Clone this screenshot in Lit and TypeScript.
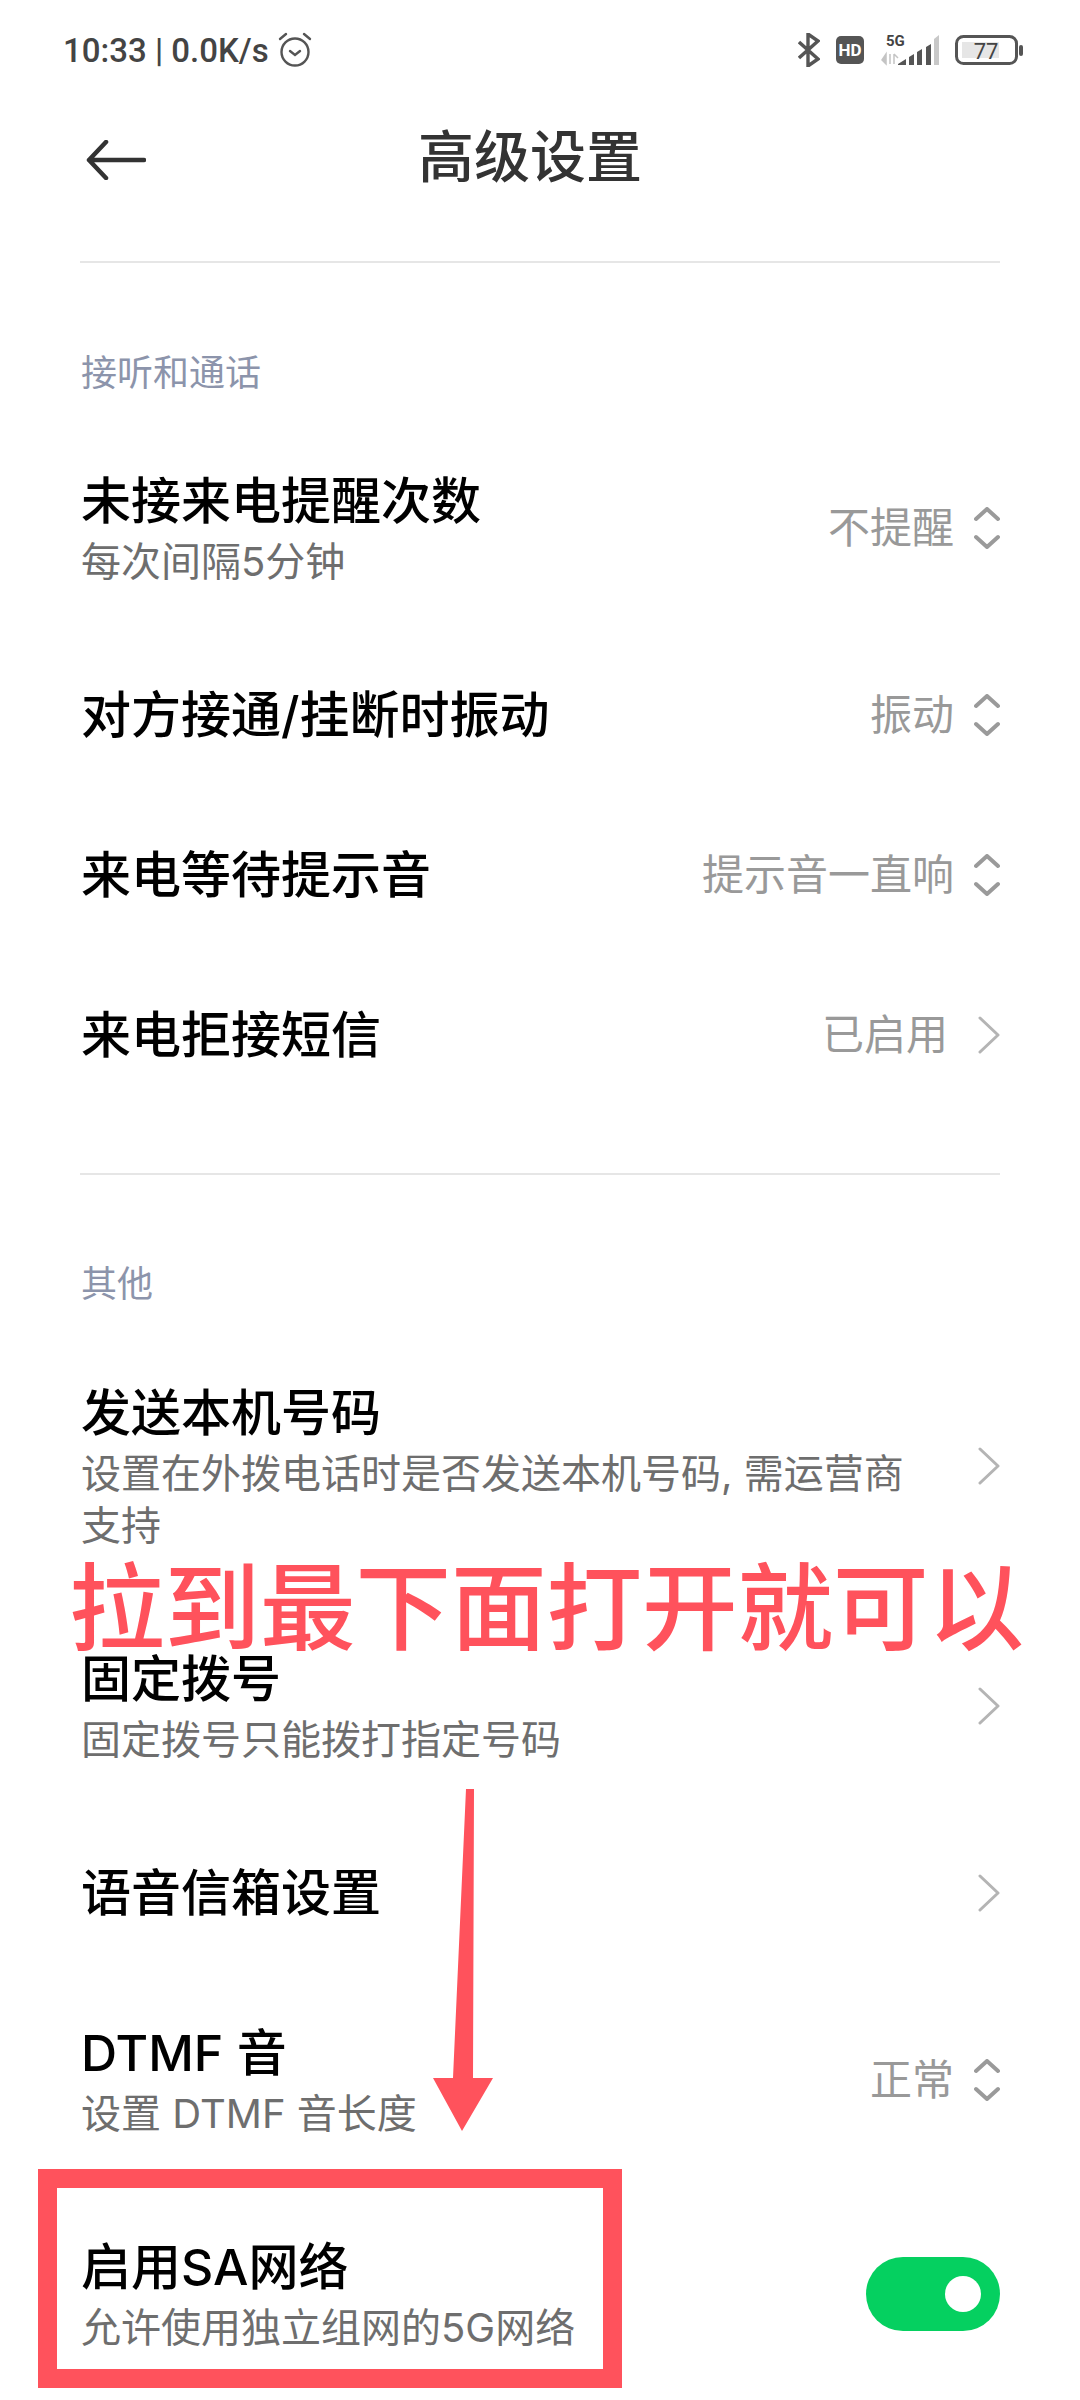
import { LitElement, css, html } from "lit";
import { customElement } from "lit/decorators.js";

const upDown = html`<svg class="updown" viewBox="0 0 26 42" width="26" height="42" fill="none" stroke="#9a9a9a" stroke-width="4" stroke-linecap="round" stroke-linejoin="round">
  <path d="M2 12 13 2l11 10M2 30l11 10 11-10" />
</svg>`;

const chevron = html`<svg class="chevron" viewBox="0 0 22 38" width="22" height="38" fill="none" stroke="#b4b4b4" stroke-width="3" stroke-linecap="round" stroke-linejoin="round">
  <path d="M2 2l18 17L2 36" />
</svg>`;

interface Row {
  title: string;
  sub?: string;
  value?: string;
  icon?: "updown" | "chevron" | "toggle";
}

const callRows: Row[] = [
  { title: "未接来电提醒次数", sub: "每次间隔5分钟", value: "不提醒", icon: "updown" },
  { title: "对方接通/挂断时振动", value: "振动", icon: "updown" },
  { title: "来电等待提示音", value: "提示音一直响", icon: "updown" },
  { title: "来电拒接短信", value: "已启用", icon: "chevron" },
];

const otherRows: Row[] = [
  { title: "发送本机号码", sub: "设置在外拨电话时是否发送本机号码, 需运营商支持", icon: "chevron" },
  { title: "固定拨号", sub: "固定拨号只能拨打指定号码", icon: "chevron" },
  { title: "语音信箱设置", icon: "chevron" },
  { title: "DTMF 音", sub: "设置 DTMF 音长度", value: "正常", icon: "updown" },
  { title: "启用SA网络", sub: "允许使用独立组网的5G网络", icon: "toggle" },
];

@customElement("app-root")
export class AppRoot extends LitElement {
  static styles = css`
    :host {
      display: block;
      position: relative;
      width: 1080px;
      height: 2400px;
      overflow: hidden;
      background: #fff;
      font-family: Inter, "Noto Sans CJK SC", sans-serif;
    }

    .status {
      display: flex;
      align-items: center;
      justify-content: space-between;
      height: 100px;
      padding: 0 57px 0 63px;
      box-sizing: border-box;
      color: #444;
    }

    .status-left {
      display: flex;
      align-items: center;
      gap: 8px;
      font: 500 33px Roboto, sans-serif;
    }

    .status-right {
      display: flex;
      align-items: center;
    }

    .bluetooth { margin-right: 16px; }
    .hd { margin-right: 17px; }
    .signal { margin-right: 16px; margin-bottom: 4px; }

    .header {
      display: flex;
      align-items: center;
      height: 120px;
      padding-left: 86px;
    }

    .title {
      margin-left: 272px;
      padding-bottom: 6px;
      font-size: 56px;
      font-weight: 500;
      line-height: 70px;
      color: #333;
    }

    .divider {
      height: 2px;
      margin: 0 80px;
      background: #e6e6e6;
    }

    .first { margin-top: 41px; }
    .second { margin-top: 58px; }

    .label {
      margin: 85px 81px 23px;
      font-size: 36px;
      line-height: 50px;
      color: #8c94ab;
    }

    .second + .label {
      margin-top: 84px;
      margin-bottom: 24px;
    }

    .row {
      display: flex;
      align-items: center;
      box-sizing: border-box;
      padding: 50px 80px 50px 81px;
    }

    .text {
      flex: 1;
      min-width: 0;
    }

    .row-title {
      font-size: 50px;
      font-weight: 500;
      line-height: 60px;
      color: #000;
    }

    .row-sub {
      max-width: 840px;
      margin-top: 5px;
      margin-bottom: -3px;
      font-size: 40px;
      line-height: 52px;
      color: #6e6e6e;
    }

    .value {
      font-size: 42px;
      line-height: 52px;
      color: #999;
    }

    .updown { margin-left: 20px; }
    .chevron { margin-left: 30px; }

    .toggle {
      position: relative;
      width: 134px;
      height: 74px;
      border-radius: 37px;
      background: #05d060;
    }

    .knob {
      position: absolute;
      top: 19px;
      right: 19px;
      width: 36px;
      height: 36px;
      border-radius: 50%;
      background: #fff;
    }

    .note {
      position: absolute;
      left: 69px;
      top: 1548px;
      font-size: 95.5px;
      font-weight: 500;
      line-height: 120px;
      color: #ff525c;
      white-space: nowrap;
    }

    .arrow {
      position: absolute;
      left: 433px;
      top: 1789px;
    }

    .box {
      position: absolute;
      left: 38px;
      top: 2169px;
      width: 584px;
      height: 219px;
      box-sizing: border-box;
      border: 19px solid #ff525c;
    }
  `;

  renderIcon(row: Row) {
    if (row.icon === "updown") return upDown;
    if (row.icon === "chevron") return chevron;
    if (row.icon === "toggle") return html`<div class="toggle"><div class="knob"></div></div>`;
    return null;
  }

  renderRow(row: Row) {
    return html`<div class="row">
      <div class="text">
        <div class="row-title">${row.title}</div>
        ${row.sub ? html`<div class="row-sub">${row.sub}</div>` : null}
      </div>
      ${row.value ? html`<div class="value">${row.value}</div>` : null}
      ${this.renderIcon(row)}
    </div>`;
  }

  renderStatus() {
    return html`<div class="status">
      <div class="status-left">
        <span>10:33 | 0.0K/s</span>
        <svg viewBox="0 0 36 36" width="36" height="36" fill="none" stroke="#555" stroke-width="2.4" stroke-linecap="round">
          <circle cx="18" cy="20" r="13.5" />
          <path d="M13 19l5 4 5-4M3 7l6-5M33 7l-6-5" />
        </svg>
      </div>
      <div class="status-right">
        <svg class="bluetooth" viewBox="0 0 22 34" width="22" height="34" fill="none" stroke="#555" stroke-width="3.4">
          <path d="M1 9l19 17-10 7V1l10 7L1 25" />
        </svg>
        <svg class="hd" viewBox="0 0 28 28" width="28" height="28">
          <rect width="28" height="28" rx="5" fill="#555" />
          <text x="14" y="20" text-anchor="middle" font-family="Roboto" font-weight="700" font-size="17" fill="#fff">HD</text>
        </svg>
        <svg class="signal" viewBox="0 -4 58 36" width="58" height="36">
          <text x="5" y="12" font-family="Roboto" font-weight="700" font-size="15" fill="#444">5G</text>
          <path d="M5 20v10l-4-4zM9 20v10M13 20v10M13 20l4 4" fill="#c4c4c4" stroke="#c4c4c4" stroke-width="1.5" />
          <path d="M17 30l8-5v6h-8zM28 23l5-3v11h-5zM36 18l5-3v16h-5zM45 13l5-3v21h-5z" fill="#555" />
          <path d="M53 5l5-4v30h-5z" fill="#c8c8c8" />
        </svg>
        <svg viewBox="0 0 68 30" width="68" height="30">
          <rect x="1.5" y="1.5" width="60" height="27" rx="7" fill="none" stroke="#555" stroke-width="3" />
          <rect x="7" y="7" width="37" height="16" fill="#e6e6e6" />
          <rect x="64" y="10" width="4" height="11" rx="2" fill="#555" />
          <text x="31" y="24" text-anchor="middle" font-family="Roboto" font-size="22" fill="#444">77</text>
        </svg>
      </div>
    </div>`;
  }

  render() {
    return html`
      ${this.renderStatus()}
      <div class="header">
        <svg viewBox="0 0 60 40" width="60" height="40" fill="none" stroke="#333" stroke-width="4.5" stroke-linecap="round" stroke-linejoin="round">
          <path d="M58 20H3M20 2 3 20l17 18" />
        </svg>
        <div class="title">高级设置</div>
      </div>
      <div class="divider first"></div>
      <div class="label">接听和通话</div>
      ${callRows.map((row) => this.renderRow(row))}
      <div class="divider second"></div>
      <div class="label">其他</div>
      ${otherRows.map((row) => this.renderRow(row))}

      <div class="note">拉到最下面打开就可以</div>
      <svg class="arrow" viewBox="0 0 60 342" width="60" height="342" fill="#ff525c">
        <path d="M33 0h8l-1 289h20l-31 53L0 289h20z" />
      </svg>
      <div class="box"></div>
    `;
  }
}
